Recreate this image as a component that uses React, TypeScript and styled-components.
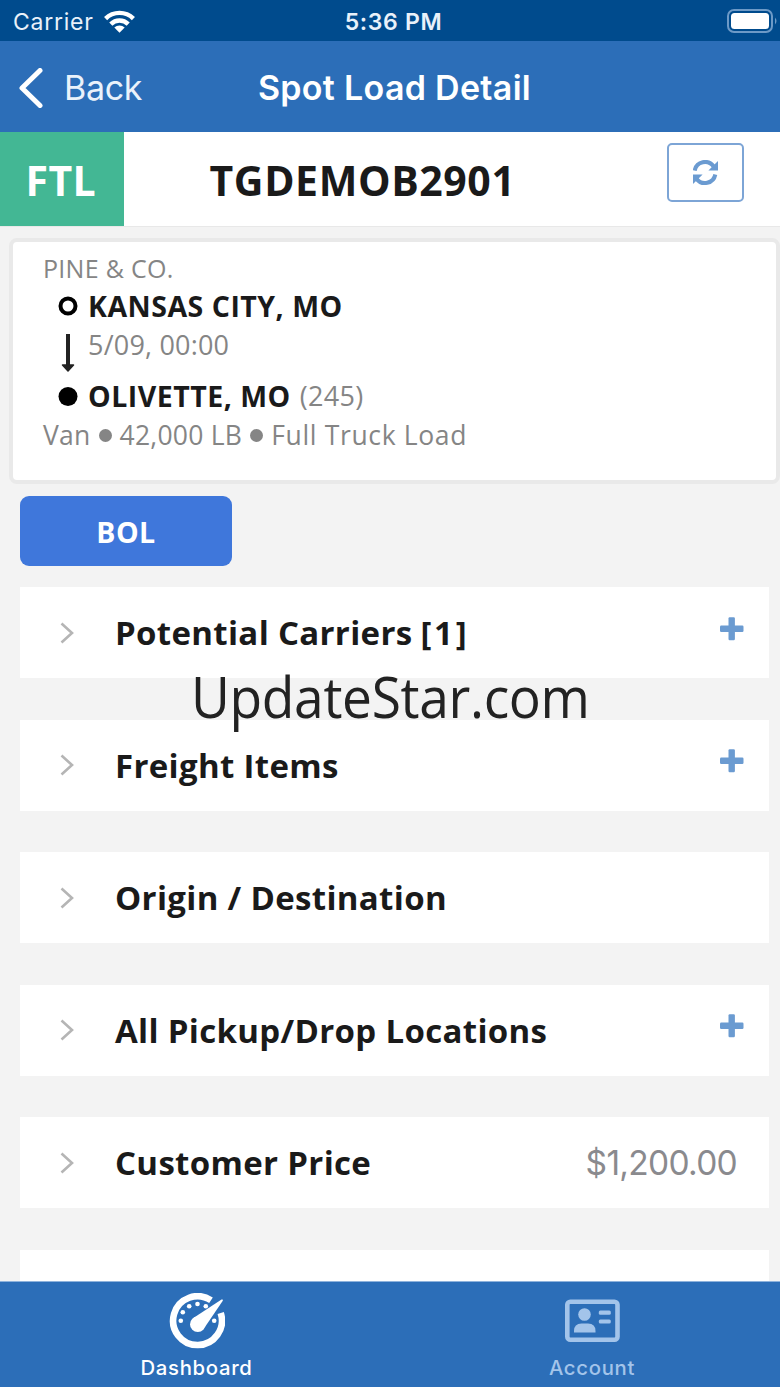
import React from "react";
import styled, { createGlobalStyle } from "styled-components";

const Global = createGlobalStyle`
  * { box-sizing: border-box; }
  html, body { margin: 0; padding: 0; }
  body { background: #f3f3f3; overflow: hidden; }
`;

const sans = `"Open Sans", "Noto Sans", sans-serif`;
const system = `Inter, Roboto, sans-serif`;

const Screen = styled.div`
  width: 780px;
  height: 1387px;
  display: flex;
  flex-direction: column;
  overflow: hidden;
  background: #f3f3f3;
  font-family: ${sans};
  color: #1a1a1a;
  white-space: nowrap;
`;

const StatusBar = styled.header`
  flex: none;
  height: 41px;
  display: grid;
  grid-template-columns: 1fr auto 1fr;
  align-items: center;
  padding: 2px 3px 0 13px;
  background: #004b8d;
  color: #e9f1fa;
  font-family: ${system};
  font-size: 23px;
`;

const Carrier = styled.div`
  display: flex;
  align-items: center;
  gap: 10px;
  letter-spacing: 0.75px;
`;

const Time = styled.div`
  font-weight: 600;
  letter-spacing: 0.65px;
  margin-right: 3px;
`;

const Battery = styled.div`
  justify-self: end;
  display: flex;
`;

const NavBar = styled.nav`
  flex: none;
  height: 91px;
  display: grid;
  grid-template-columns: 1fr auto 1fr;
  align-items: center;
  padding: 2px 9px 0 18px;
  background: #2c6eb8;
  color: #fff;
  font-family: ${system};
  font-size: 34px;
`;

const Back = styled.div`
  display: flex;
  align-items: center;
  gap: 20px;
  letter-spacing: -0.3px;
  color: #eaf2fb;
`;

const NavTitle = styled.h1`
  margin: 0;
  font-size: 34px;
  font-weight: 600;
  letter-spacing: 0.3px;
`;

const LoadHeader = styled.section`
  flex: none;
  height: 95px;
  display: flex;
  background: #fff;
  border-bottom: 1px solid #e8e8e8;
`;

const LoadType = styled.div`
  width: 123.5px;
  display: flex;
  align-items: center;
  justify-content: center;
  padding: 1px 2px 0 0;
  background: #43b794;
  color: #fff;
  font-size: 41px;
  font-weight: 700;
  letter-spacing: 0.3px;
`;

const LoadId = styled.div`
  flex: 1;
  display: flex;
  align-items: center;
  padding: 1px 0 0 86px;
  font-size: 41px;
  font-weight: 700;
  letter-spacing: 0.6px;
`;

const RefreshButton = styled.button`
  width: 77px;
  height: 59px;
  margin: 11px 36px 0 0;
  padding: 0;
  display: flex;
  align-items: center;
  justify-content: center;
  border: 2px solid #7da5d6;
  border-radius: 5px;
  background: #fff;
`;

const Summary = styled.section`
  flex: none;
  height: 246px;
  margin: 11px 0 0 9px;
  padding: 11px 0 0 30px;
  border: 4px solid #e9e9e9;
  border-radius: 8px;
  background: #fff;
  color: #858585;
  display: flex;
  flex-direction: column;
`;

const SummaryLine = styled.div<{ $size: number; $height: number; $spacing?: number }>`
  display: flex;
  align-items: center;
  height: ${(p) => p.$height}px;
  font-size: ${(p) => p.$size}px;
  letter-spacing: ${(p) => p.$spacing ?? 0}px;
`;

const Route = styled.div`
  display: flex;
  padding: 2px 0 0 14px;
`;

const RouteStops = styled.div`
  padding-left: 10px;
`;

const City = styled.span`
  color: #1a1a1a;
  font-size: 28.5px;
  font-weight: 700;
  letter-spacing: 0.5px;
  margin-right: 9px;
`;

const Miles = styled.span`
  margin-top: -1px;
  letter-spacing: 0.3px;
`;

const Shipment = styled.span`
  letter-spacing: 0.65px;
`;

const Dot = styled.span`
  width: 13px;
  height: 13px;
  margin: 1px 8px 0;
  border-radius: 50%;
  background: #858585;
`;

const BolButton = styled.button`
  flex: none;
  width: 212px;
  height: 70px;
  margin: 12px 0 0 20px;
  padding: 1px 0 0;
  border: 0;
  border-radius: 9px;
  background: #3f77db;
  color: #fff;
  font-family: ${sans};
  font-size: 28.5px;
  font-weight: 700;
  letter-spacing: 0.5px;
`;

const Sections = styled.main`
  flex: 1;
  min-height: 0;
  overflow: hidden;
  display: flex;
  flex-direction: column;
  gap: 41.6px;
  padding: 21px 11px 0 20px;
`;

const Row = styled.section`
  flex: none;
  height: 91px;
  display: flex;
  align-items: center;
  padding: 0 25px 0 40px;
  background: #fff;
`;

const RowTitle = styled.h2`
  margin: 0 auto 0 41px;
  font-size: 33px;
  line-height: 45px;
  font-weight: 700;
  letter-spacing: 0.33px;
`;

const Count = styled.span`
  letter-spacing: 2.8px;
  margin-left: -1px;
`;

const Price = styled.span`
  margin-right: 7px;
  font-family: ${system};
  font-size: 33.5px;
  letter-spacing: -0.7px;
  color: #8a8a8e;
`;

const PlusIcon = styled.svg`
  margin-top: -8px;
`;

const TabBar = styled.footer`
  flex: none;
  height: 106px;
  display: grid;
  grid-template-columns: 393px 1fr;
  border-top: 1px solid #8fb3dc;
  background: #2c6eb8;
`;

const Tab = styled.div<{ $active?: boolean }>`
  display: flex;
  flex-direction: column;
  align-items: center;
  padding: 11px 0 0 ${(p) => (p.$active ? 0 : 11)}px;
  color: ${(p) => (p.$active ? "#fff" : "#a3c4ea")};
  font-family: ${system};
  font-weight: 500;
  font-size: 20.3px;
  line-height: 24px;
  letter-spacing: 0.7px;
`;

const TabIcon = styled.div`
  height: 63px;
`;

const Watermark = styled.div`
  position: absolute;
  left: 191px;
  top: 658px;
  font-family: ${sans};
  font-size: 56px;
  line-height: 76px;
  letter-spacing: -0.35px;
  color: #222;
  transform: scaleX(0.952);
  transform-origin: left center;
`;

const Wifi = () => (
  <svg width="31" height="23" viewBox="0 0 31 23">
    <g fill="none" stroke="#fff" strokeWidth="4.4">
      <path d="M1.6 8.6a19.7 19.7 0 0 1 27.8 0" />
      <path d="M6.8 14.1a12.3 12.3 0 0 1 17.4 0" />
    </g>
    <path d="M15.5 22.8l-5.2-5.2a7.4 7.4 0 0 1 10.4 0z" fill="#fff" />
  </svg>
);

const dashboardDots = [
  [11.8, 27.7],
  [13.8, 19.3],
  [20.2, 13.3],
  [28.5, 11],
  [36.8, 13.3],
  [45.2, 27.7],
];

const rows: { title: string; count?: string; add?: boolean; price?: string }[] = [
  { title: "Potential Carriers", count: "[1]", add: true },
  { title: "Freight Items", add: true },
  { title: "Origin / Destination" },
  { title: "All Pickup/Drop Locations", add: true },
  { title: "Customer Price", price: "$1,200.00" },
];

export default function App() {
  return (
    <Screen>
      <Global />
      <StatusBar>
        <Carrier>Carrier <Wifi /></Carrier>
        <Time>5:36 PM</Time>
        <Battery>
          <svg width="50" height="25" viewBox="0 0 50 25">
            <rect x="1" y="1" width="44" height="22" rx="6" fill="none" stroke="#6d9ac7" strokeWidth="2" />
            <rect x="4" y="4" width="38" height="16" rx="3.5" fill="#fff" />
            <path d="M48 8.5q3 3.5 0 7z" fill="#6d9ac7" />
          </svg>
        </Battery>
      </StatusBar>
      <NavBar>
        <Back>
          <svg width="26" height="40" viewBox="0 0 26 40">
            <path d="M22 2.5L4 20l18 17.5" fill="none" stroke="#fff" strokeWidth="5" strokeLinecap="round" strokeLinejoin="round" />
          </svg>
          Back
        </Back>
        <NavTitle>Spot Load Detail</NavTitle>
      </NavBar>
      <LoadHeader>
        <LoadType>FTL</LoadType>
        <LoadId>TGDEMOB2901</LoadId>
        <RefreshButton aria-label="Refresh">
          <svg width="26" height="26" viewBox="0.5 0.5 26 26">
            <g fill="none" stroke="#6b9bd1" strokeWidth="4">
              <path d="M2.2 11A10.5 10.5 0 0 1 21 6.8" />
              <path d="M22.8 15A10.5 10.5 0 0 1 4 19.2" />
            </g>
            <path d="M25.5 1.5v9.6h-9.6zM0.500 24.5v-9.6h9.6z" fill="#6b9bd1" />
          </svg>
        </RefreshButton>
      </LoadHeader>
      <Summary>
        <SummaryLine $size={25} $height={30} $spacing={0.3}>PINE &amp; CO.</SummaryLine>
        <Route>
          <svg width="21" height="126" viewBox="0 0 21 126">
            <circle cx="11" cy="21" r="7.5" fill="#fff" stroke="#000" strokeWidth="4" />
            <path d="M11 49v34" stroke="#222" strokeWidth="4" />
            <path d="M5.5 80h11l-5.5 6z" fill="#222" stroke="#222" strokeLinejoin="round" strokeWidth="1.5" />
            <circle cx="11" cy="111.5" r="9.5" fill="#000" />
          </svg>
          <RouteStops>
            <SummaryLine $size={28.5} $height={41}><City>KANSAS CITY, MO</City></SummaryLine>
            <SummaryLine $size={27} $height={36} $spacing={0.2}>5/09, 00:00</SummaryLine>
            <SummaryLine $size={27} $height={67}><City>OLIVETTE, MO</City><Miles>(245)</Miles></SummaryLine>
          </RouteStops>
        </Route>
        <SummaryLine $size={26.5} $height={12} $spacing={0.25}>
          Van<Dot />42,000 LB<Dot /><Shipment>Full Truck Load</Shipment>
        </SummaryLine>
      </Summary>
      <BolButton>BOL</BolButton>
      <Sections>
        {rows.map((row) => (
          <Row key={row.title}>
            <svg width="14" height="22" viewBox="0 0 14 22">
              <path d="M1.5 1.5L12 11 1.5 20.5" fill="none" stroke="#b5b5b5" strokeWidth="2.6" />
            </svg>
            <RowTitle>
              {row.title}
              {row.count && <> <Count>{row.count}</Count></>}
            </RowTitle>
            {row.add && (
              <PlusIcon width="24" height="24" viewBox="0 0 24 24">
                <g fill="#6b9bd1">
                  <rect x="8.5" y="0.3" width="6.4" height="23" rx="1.2" />
                  <rect x="0" y="8.6" width="23.5" height="6.4" rx="1.2" />
                </g>
              </PlusIcon>
            )}
            {row.price && <Price>{row.price}</Price>}
          </Row>
        ))}
        <Row />
      </Sections>
      <TabBar>
        <Tab $active>
          <TabIcon>
            <svg width="56" height="56" viewBox="0 0 56 56">
              <path d="M42 7.3A24.4 24.4 0 1 0 51.7 20" fill="none" stroke="#fff" strokeWidth="6.6" />
              <path d="M52.5 6.6q1.8-.6 1.3 1.2L35.8 34.2 24 25.2z" fill="#fff" />
              <circle cx="28.8" cy="31.3" r="7.8" fill="#fff" />
              {dashboardDots.map(([x, y]) => (
                <circle key={x} cx={x} cy={y} r="2.3" fill="#fff" />
              ))}
            </svg>
          </TabIcon>
          Dashboard
        </Tab>
        <Tab>
          <TabIcon>
            <svg width="56" height="56" viewBox="0 0 56 56">
              <rect x="3.3" y="8.8" width="50.2" height="38" rx="3" fill="none" stroke="#a3c4ea" strokeWidth="4.6" />
              <g fill="#a3c4ea">
                <circle cx="20.5" cy="21.5" r="6.3" />
                <path d="M10 39.5v-1.5q0-7.5 7.5-7.5h6.5q7.5 0 7.5 7.5v1.5z" />
                <rect x="34.8" y="17.5" width="12" height="4.2" rx="1.5" />
                <rect x="34.8" y="26.4" width="12" height="4.2" rx="1.5" />
              </g>
            </svg>
          </TabIcon>
          Account
        </Tab>
      </TabBar>
      <Watermark>UpdateStar.com</Watermark>
    </Screen>
  );
}
